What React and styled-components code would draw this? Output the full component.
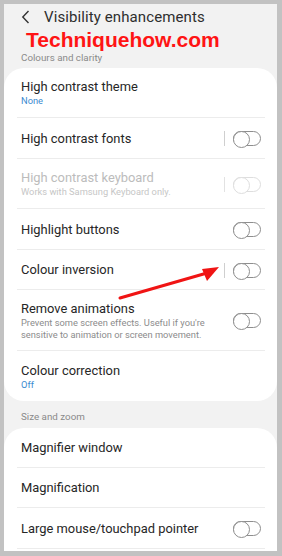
import styled, {createGlobalStyle} from "styled-components";

const GlobalStyle = createGlobalStyle`
    html, body {
        margin: 0;
        padding: 0;
        background: #c2c2c2;
    }
    * {
        box-sizing: border-box;
    }
`;

const Frame = styled.div`
    width: 282px;
    height: 556px;
    padding: 4px 5px 5px 4px;
    background: #c2c2c2;
`;
const Screen = styled.div`
    position: relative;
    overflow: hidden;
    width: 273px;
    height: 547px;
    background: #f2f2f2;
    font-family: Roboto, "Noto Sans", sans-serif;
`;
const Header = styled.div`
    display: flex;
    align-items: center;
    height: 26px;
    padding-left: 17px;
    gap: 13px;
    color: #2e2e2e;

    h1{
        margin: 0;
        font-size: 15px;
        font-weight: 400;
        letter-spacing: 0.1px;
    }
`;
const Watermark = styled.div`
    position: absolute;
    top: 24px;
    left: 22px;
    font-family: "Liberation Sans", Arial, sans-serif;
    font-weight: 700;
    font-size: 21px;
    color: #ff1414;
    z-index: 3;
`;
const SectionLabel = styled.div`
    padding: ${({$top}) => $top}px 17px ${({$bottom}) => $bottom}px;
    font-size: 9.8px;
    line-height: 12px;
    color: #8a8a8a;
`;
const Card = styled.div`
    background: #fff;
    border-radius: 20px;
    padding-bottom: ${({$extra}) => $extra || 0}px;
`;
const Row = styled.div`
    display: flex;
    align-items: center;
    height: ${({$h}) => $h}px;
    padding: 1px 16px 0 17px;
`;
const TextBox = styled.div`
    flex: 1;
    min-width: 0;
`;
const Title = styled.div`
    font-size: 12.9px;
    line-height: 16px;
    color: ${({$disabled}) => $disabled ? "#bcbcbc" : "#262626"};
`;
const Sub = styled.div`
    font-size: 9.3px;
    line-height: 12px;
    color: ${({$blue, $disabled}) => $blue ? "#3a8ad0" : $disabled ? "#c6c6c6" : "#8c8c8c"};
`;
const Divider = styled.div`
    height: 1px;
    margin: 0 12px 0 13px;
    background: #ececec;
`;
const Separator = styled.div`
    width: 1px;
    height: 15px;
    margin-right: 8px;
    background: ${({$disabled}) => $disabled ? "#e2e2e2" : "#cfcfcf"};
`;
const Toggle = styled.div`
    position: relative;
    width: 28px;
    height: 15px;
    border: 1px solid ${({$disabled}) => $disabled ? "#dedede" : "#8e8e8e"};
    border-radius: 8px;
    flex-shrink: 0;

    &::before{
        content: "";
        position: absolute;
        left: -1px;
        top: -1px;
        width: 15px;
        height: 15px;
        border: 1px solid ${({$disabled}) => $disabled ? "#dedede" : "#8e8e8e"};
        border-radius: 50%;
        background: #fff;
    }
`;
const Arrow = styled.svg`
    position: absolute;
    left: 0;
    top: 0;
    z-index: 4;
    pointer-events: none;
`;

const Back = () => (
    <svg width="10" height="14" viewBox="0 0 10 14">
        <path d="M7.5 1 L1.8 7 L7.5 13" fill="none" stroke="#333" strokeWidth="1.4"/>
    </svg>
);

const clarity = [
    {title: "High contrast theme", sub: "None", blue: true, h: 49},
    {title: "High contrast fonts", toggle: true, sep: true, h: 40},
    {title: "High contrast keyboard", sub: "Works with Samsung Keyboard only.", toggle: true, sep: true, disabled: true, h: 49},
    {title: "Highlight buttons", toggle: true, h: 40},
    {title: "Colour inversion", toggle: true, sep: true, h: 39},
    {title: "Remove animations", sub: ["Prevent some screen effects. Useful if you're", "sensitive to animation or screen movement."], toggle: true, h: 60},
    {title: "Colour correction", sub: "Off", blue: true, h: 50},
];

const zoom = [
    {title: "Magnifier window", h: 39},
    {title: "Magnification", h: 39},
    {title: "Large mouse/touchpad pointer", toggle: true, h: 40},
];

function SettingRow({title, sub, blue, toggle, sep, disabled, h}) {
    const subs = Array.isArray(sub) ? sub : sub ? [sub] : [];
    return (
        <Row $h={h}>
            <TextBox>
                <Title $disabled={disabled}>{title}</Title>
                {subs.map((s, idx) => (
                    <Sub key={idx} $blue={blue} $disabled={disabled}>{s}</Sub>
                ))}
            </TextBox>
            {sep && <Separator $disabled={disabled}/>}
            {toggle && <Toggle $disabled={disabled}/>}
        </Row>
    );
}

export default function App() {
    return (
        <>
            <GlobalStyle/>
            <Frame>
                <Screen>
                    <Header>
                        <Back/>
                        <h1>Visibility enhancements</h1>
                    </Header>
                    <Watermark>Techniquehow.com</Watermark>
                    <SectionLabel $top={22} $bottom={4}>Colours and clarity</SectionLabel>
                    <Card>
                        {clarity.map((item, idx) => (
                            <div key={idx}>
                                <SettingRow {...item}/>
                                {idx < clarity.length - 1 && <Divider/>}
                            </div>
                        ))}
                    </Card>
                    <SectionLabel $top={10} $bottom={5}>Size and zoom</SectionLabel>
                    <Card $extra={40}>
                        {zoom.map((item, idx) => (
                            <div key={idx}>
                                <SettingRow {...item}/>
                                <Divider/>
                            </div>
                        ))}
                    </Card>
                    <Arrow width="273" height="547" viewBox="0 0 273 547">
                        <line x1="116" y1="294" x2="203" y2="269" stroke="#f01414" strokeWidth="3" strokeLinecap="round"/>
                        <polygon points="215,263 198,265 203,277" fill="#f01414"/>
                    </Arrow>
                </Screen>
            </Frame>
        </>
    );
}
